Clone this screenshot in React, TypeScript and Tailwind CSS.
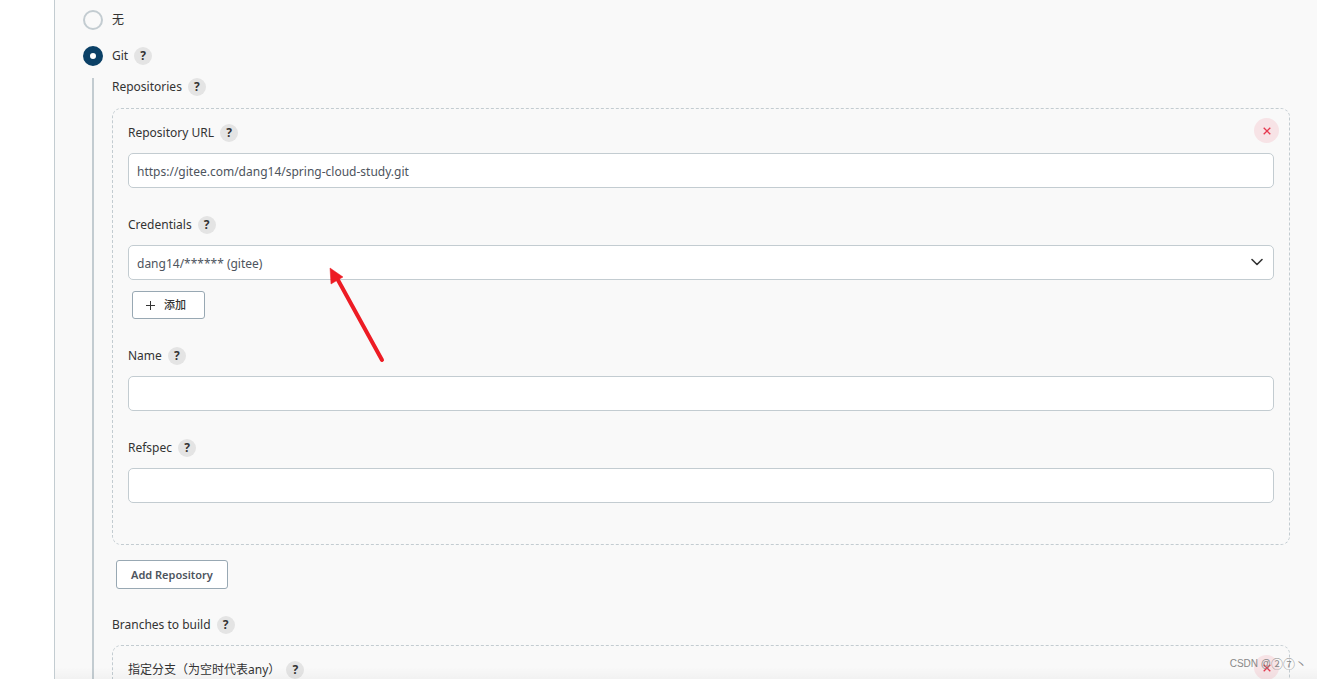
import type { ReactNode } from 'react'

function Help({ topic }: { topic: string }) {
  return (
    <button
      type="button"
      aria-label={`Help: ${topic}`}
      className="flex size-[18px] shrink-0 items-center justify-center rounded-full bg-[#e4e4e4] text-[12px] leading-[18px] font-bold text-[#333]"
    >
      ?
    </button>
  )
}

function FieldLabel({ text, htmlFor }: { text: string; htmlFor?: string }) {
  return (
    <div className="flex h-[18px] items-center gap-[6px]">
      {htmlFor ? <label htmlFor={htmlFor}>{text}</label> : <span>{text}</span>}
      <Help topic={text} />
    </div>
  )
}

function TextField({ id, label, value }: { id: string; label: string; value?: string }) {
  return (
    <div className="flex flex-col gap-[11px]">
      <FieldLabel text={label} htmlFor={id} />
      <input
        id={id}
        type="text"
        defaultValue={value}
        className="h-[35px] w-full rounded-[5px] border border-[#c3ccd1] bg-white px-2 pt-[2px] text-[#4d545d] outline-none"
      />
    </div>
  )
}

function Chunk({ children }: { children: ReactNode }) {
  return (
    <div className="relative rounded-[9px] border border-dashed border-[#c3ccd1] px-[15px] pt-[15px] pb-[41px]">
      <button
        type="button"
        aria-label="Delete"
        className="absolute top-[9px] right-[10px] flex size-[25px] items-center justify-center rounded-full bg-[#f7e3e6] text-[#e6394f]"
      >
        <svg viewBox="0 0 8 8" className="size-2" fill="none" stroke="currentColor" strokeWidth="1.3">
          <path d="M.7.7l6.6 6.6M7.3.7L.7 7.3" />
        </svg>
      </button>
      {children}
    </div>
  )
}

function ScmRadio({ label, checked }: { label: string; checked?: boolean }) {
  return (
    <label className="flex h-5 items-center gap-[9px]">
      <input
        type="radio"
        name="scm"
        defaultChecked={checked}
        className="size-5 appearance-none rounded-full border-2 border-[#c3ccd1] checked:border-[7px] checked:border-[#0b4066] checked:bg-white"
      />
      {label}
    </label>
  )
}

export default function App() {
  return (
    <div className="relative flex h-screen overflow-hidden bg-white font-['Noto_Sans','Noto_Sans_CJK_SC',sans-serif] text-[12px] leading-[18px] text-[#333]">
      <aside className="w-[54px] shrink-0" />
      <main className="min-w-0 flex-1 border-l border-[#c3ccd1] bg-[#f9f9f9] pt-[10px] pr-[27px] pl-7">
        <ScmRadio label="无" />
        <div className="mt-4 flex items-center gap-[6px]">
          <ScmRadio label="Git" checked />
          <Help topic="Git" />
        </div>

        <div className="mt-3 ml-[9px] border-l-2 border-[#c3ccd1] pl-[18px]">
          <section className="flex flex-col gap-3">
            <FieldLabel text="Repositories" />
            <Chunk>
              <div className="flex flex-col gap-7">
                <TextField id="url" label="Repository URL" value="https://gitee.com/dang14/spring-cloud-study.git" />
                <div className="flex flex-col items-start gap-[11px]">
                  <FieldLabel text="Credentials" htmlFor="credentials" />
                  <div className="relative w-full">
                    <select
                      id="credentials"
                      className="block h-[35px] w-full appearance-none rounded-[5px] border border-[#c3ccd1] bg-white px-2 pt-[2px] text-[#4d545d] outline-none"
                    >
                      <option>dang14/****** (gitee)</option>
                    </select>
                    <svg
                      viewBox="0 0 12 8"
                      className="pointer-events-none absolute top-[13px] right-[11px] h-2 w-3"
                      fill="none"
                      stroke="#333"
                      strokeWidth="1.6"
                      strokeLinecap="round"
                      strokeLinejoin="round"
                    >
                      <path d="M1 1.5l5 5 5-5" />
                    </svg>
                  </div>
                  <button
                    type="button"
                    className="ml-1 flex h-7 w-[73px] items-center gap-[9px] rounded-[3px] border border-[#98a8b3] bg-white pl-[13px] text-[11px] font-medium"
                  >
                    <svg viewBox="0 0 9 9" className="size-[9px]" fill="none" stroke="currentColor">
                      <path d="M4.5 0v9M0 4.5h9" />
                    </svg>
                    添加
                  </button>
                </div>
                <TextField id="name" label="Name" />
                <TextField id="refspec" label="Refspec" />
              </div>
            </Chunk>
          </section>

          <button
            type="button"
            className="mt-[15px] ml-1 h-[29px] rounded-[3px] border border-[#98a8b3] bg-white px-[14px] text-[11px] font-semibold text-[#4d545d]"
          >
            Add Repository
          </button>

          <section className="mt-[27px] flex flex-col gap-[11px]">
            <FieldLabel text="Branches to build" />
            <Chunk>
              <TextField id="branch" label="指定分支（为空时代表any）" value="*/master" />
            </Chunk>
          </section>
        </div>
      </main>

      <div className="pointer-events-none absolute right-0 bottom-0 left-[55px] h-3 bg-linear-to-b from-transparent to-black/3" />

      <span className="absolute right-[10px] bottom-[6px] flex items-center font-['Liberation_Sans','Noto_Sans_CJK_SC',sans-serif] text-[10px] text-[#888]">
        CSDN @<span className="font-['Noto_Sans_CJK_JP',sans-serif] text-[12px]">②⑦丶</span>
      </span>

      {/* arrow pointing at the credentials drop-down */}
      <svg viewBox="0 0 56 96" className="pointer-events-none absolute top-[267px] left-[329px] h-24 w-14">
        <path d="M9 13l44 80" stroke="#ed1c24" strokeWidth="4" strokeLinecap="round" />
        <path d="M1 1l1 16 5-3 7-4z" fill="#ed1c24" stroke="#ed1c24" strokeWidth=".5" />
      </svg>
    </div>
  )
}
